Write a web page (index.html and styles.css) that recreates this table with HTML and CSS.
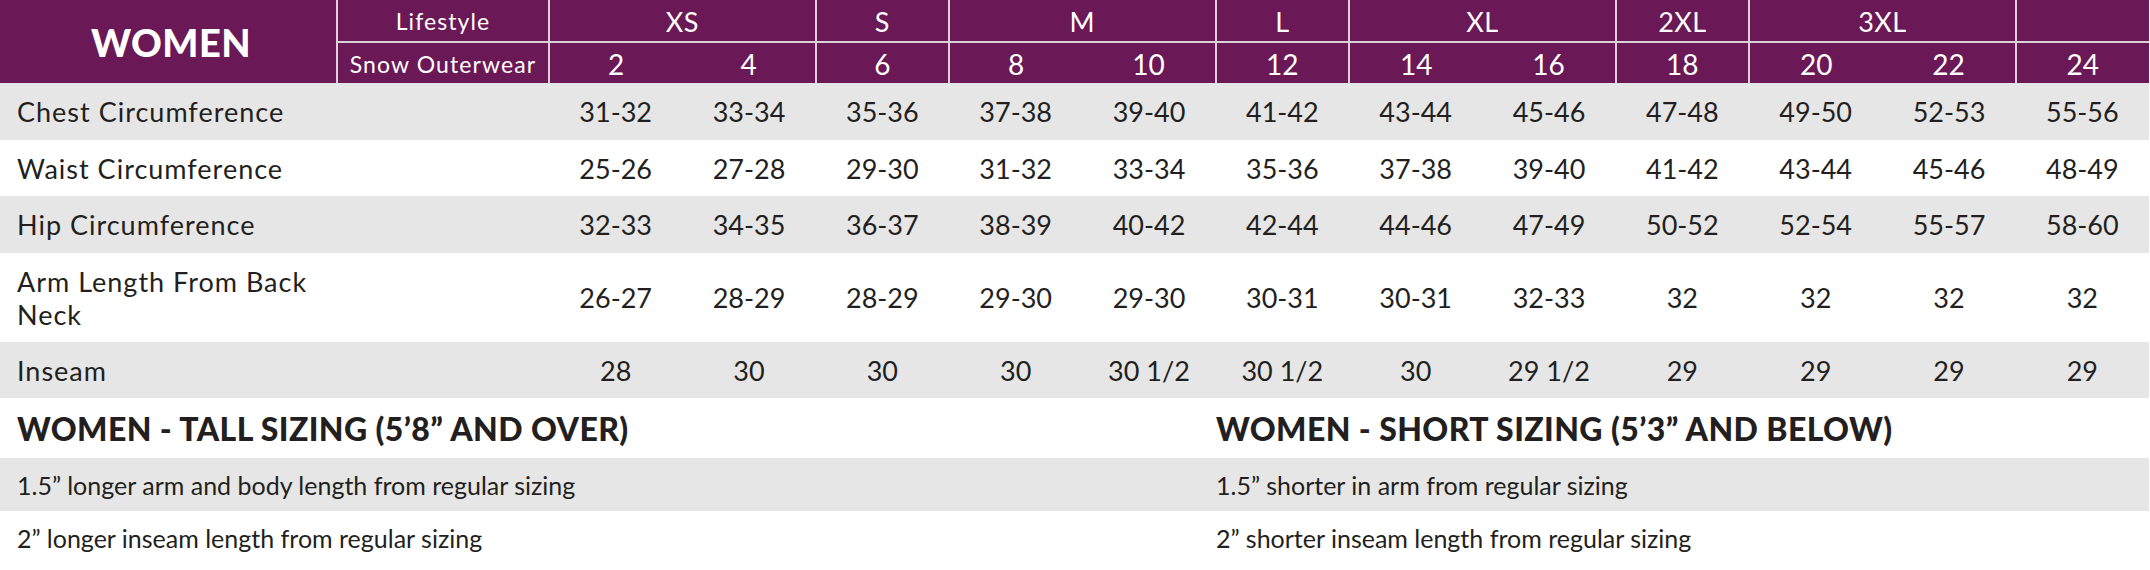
FILE: index.html
```html
<!DOCTYPE html>
<html lang="en">
<head>
<meta charset="utf-8">
<title>Women Size Chart</title>
<link rel="stylesheet" href="styles.css">
</head>
<body>
<div class="chart">
  <table class="sizes">
    <colgroup>
      <col class="c-label"><col class="c-sub">
      <col class="c-size"><col class="c-size"><col class="c-size"><col class="c-size">
      <col class="c-size"><col class="c-size"><col class="c-size"><col class="c-size">
      <col class="c-size"><col class="c-size"><col class="c-size"><col class="c-size">
    </colgroup>
    <thead>
      <tr class="h1">
        <th rowspan="2" class="brand">WOMEN</th>
        <th class="sub grp">Lifestyle</th>
        <th colspan="2" class="grp">XS</th>
        <th class="grp">S</th>
        <th colspan="2" class="grp">M</th>
        <th class="grp">L</th>
        <th colspan="2" class="grp">XL</th>
        <th class="grp">2XL</th>
        <th colspan="2" class="grp">3XL</th>
        <th class="grp"></th>
      </tr>
      <tr class="h2">
        <th class="sub grp">Snow Outerwear</th>
        <th class="grp">2</th><th>4</th>
        <th class="grp">6</th>
        <th class="grp">8</th><th>10</th>
        <th class="grp">12</th>
        <th class="grp">14</th><th>16</th>
        <th class="grp">18</th>
        <th class="grp">20</th><th>22</th>
        <th class="grp">24</th>
      </tr>
    </thead>
    <tbody>
      <tr class="shade r57">
        <td class="label">Chest Circumference</td><td></td>
        <td>31-32</td><td>33-34</td><td>35-36</td><td>37-38</td><td>39-40</td><td>41-42</td>
        <td>43-44</td><td>45-46</td><td>47-48</td><td>49-50</td><td>52-53</td><td>55-56</td>
      </tr>
      <tr class="r56">
        <td class="label">Waist Circumference</td><td></td>
        <td>25-26</td><td>27-28</td><td>29-30</td><td>31-32</td><td>33-34</td><td>35-36</td>
        <td>37-38</td><td>39-40</td><td>41-42</td><td>43-44</td><td>45-46</td><td>48-49</td>
      </tr>
      <tr class="shade r57">
        <td class="label">Hip Circumference</td><td></td>
        <td>32-33</td><td>34-35</td><td>36-37</td><td>38-39</td><td>40-42</td><td>42-44</td>
        <td>44-46</td><td>47-49</td><td>50-52</td><td>52-54</td><td>55-57</td><td>58-60</td>
      </tr>
      <tr class="r89">
        <td class="label">Arm Length From Back Neck</td><td></td>
        <td>26-27</td><td>28-29</td><td>28-29</td><td>29-30</td><td>29-30</td><td>30-31</td>
        <td>30-31</td><td>32-33</td><td>32</td><td>32</td><td>32</td><td>32</td>
      </tr>
      <tr class="shade r56">
        <td class="label">Inseam</td><td></td>
        <td>28</td><td>30</td><td>30</td><td>30</td><td>30 1/2</td><td>30 1/2</td>
        <td>30</td><td>29 1/2</td><td>29</td><td>29</td><td>29</td><td>29</td>
      </tr>
    </tbody>
  </table>

  <div class="notes">
    <div class="notes-row head">
      <h2>WOMEN - TALL SIZING (5’8” AND OVER)</h2>
      <h2>WOMEN - SHORT SIZING (5’3” AND BELOW)</h2>
    </div>
    <div class="notes-row shade">
      <p>1.5” longer arm and body length from regular sizing</p>
      <p>1.5” shorter in arm from regular sizing</p>
    </div>
    <div class="notes-row">
      <p>2” longer inseam length from regular sizing</p>
      <p>2” shorter inseam length from regular sizing</p>
    </div>
  </div>
</div>
</body>
</html>
```

FILE: styles.css
```css
* { box-sizing: border-box; }

html, body {
  margin: 0;
  padding: 0;
  background: #ffffff;
}

body {
  font-family: "Lato", "Liberation Sans", sans-serif;
  color: #231f20;
}

.chart {
  width: 2149px;
}

.sizes {
  width: 2149px;
  border-collapse: collapse;
  table-layout: fixed;
}

.c-label { width: 337px; }
.c-sub { width: 212px; }
.c-size { width: 133.33px; }

.sizes thead th {
  background: #6a1956;
  color: #ffffff;
  font-weight: 400;
  text-align: center;
  padding: 0;
  vertical-align: middle;
}

.sizes .grp {
  border-left: 2px solid #ddd1d9;
}

.sizes .h1 th {
  height: 42px;
  font-size: 27px;
  letter-spacing: 0.4px;
  border-bottom: 2px solid #ddd1d9;
  padding-top: 1px;
}

.sizes .h2 th {
  height: 41px;
  font-size: 28px;
  padding-top: 2px;
}

.sizes th.brand {
  font-size: 38px;
  font-weight: 900;
  letter-spacing: 0.5px;
  border-bottom: none;
  padding-left: 6px;
}

.sizes th.sub {
  font-size: 23px;
  letter-spacing: 1.1px;
}

.sizes tbody td {
  font-size: 27px;
  text-align: center;
  padding: 0;
  vertical-align: middle;
}

.sizes tbody td.label {
  text-align: left;
  padding-left: 17px;
  padding-right: 20px;
  line-height: 33px;
  letter-spacing: 1px;
}

.shade { background: #e6e6e6; }

.r57 td { height: 57px; }
.r56 td { height: 56px; }
.r89 td { height: 89px; }

.notes-row {
  display: grid;
  grid-template-columns: 1199px 1fr;
  align-items: center;
  padding-left: 17px;
  height: 53px;
}

.notes-row.head {
  height: 60px;
}

.notes h2 {
  margin: 0;
  font-size: 32px;
  font-weight: 900;
  letter-spacing: 0.4px;
}

.notes p {
  margin: 0;
  font-size: 25px;
  letter-spacing: 0;
}
```
